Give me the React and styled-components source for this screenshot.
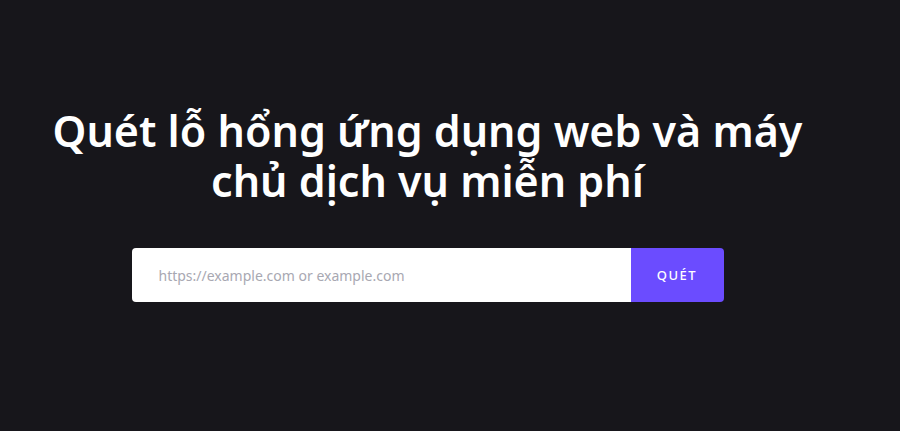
import React from "react";
import styled, { createGlobalStyle } from "styled-components";

const Global = createGlobalStyle`
  html, body { margin: 0; padding: 0; background: #17161b; }
  body { font-family: "Noto Sans", "Open Sans", sans-serif; }
  * { box-sizing: border-box; }
`;

const Page = styled.main`
  width: 855px;
  height: 431px;
  display: flex;
  flex-direction: column;
  align-items: center;
  padding-top: 106px;
`;

const Title = styled.h1`
  margin: 0;
  max-width: 790px;
  text-align: center;
  color: #ffffff;
  font-size: 43px;
  font-weight: 600;
  line-height: 50px;
`;

const SearchForm = styled.form`
  margin-top: 42px;
  display: flex;
  width: 592px;
  height: 54px;
  border-radius: 4px;
  overflow: hidden;
`;

const UrlInput = styled.input`
  flex: 1;
  border: none;
  outline: none;
  background: #ffffff;
  padding: 0 27px;
  font-family: inherit;
  font-size: 14px;
  color: #333;
  &::placeholder { color: #a8a8b2; }
`;

const ScanButton = styled.button`
  width: 93px;
  border: none;
  background: #6b4cff;
  color: #ffffff;
  font-family: inherit;
  font-size: 13px;
  letter-spacing: 1.5px;
  font-weight: 500;
  cursor: pointer;
`;

export default function App() {
  return (
    <>
      <Global />
      <Page>
        <Title>Quét lỗ hổng ứng dụng web và máy chủ dịch vụ miễn phí</Title>
        <SearchForm onSubmit={(e) => e.preventDefault()}>
          <UrlInput placeholder="https://example.com or example.com" />
          <ScanButton type="submit">QUÉT</ScanButton>
        </SearchForm>
      </Page>
    </>
  );
}
